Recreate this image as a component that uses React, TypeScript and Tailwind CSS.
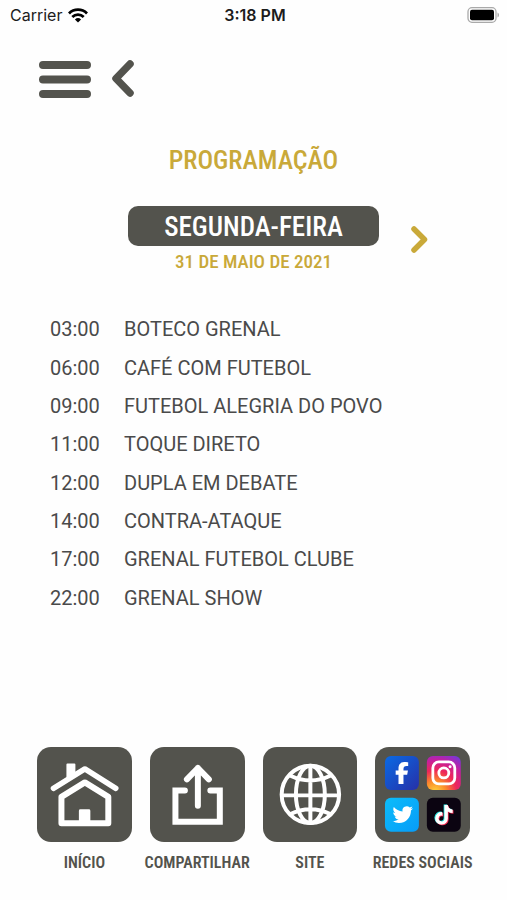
import type { ReactNode } from "react";
import { FaFacebookF, FaTiktok } from "react-icons/fa6";

type Program = {
  time: string;
  name: string;
};

const programs: Program[] = [
  { time: "03:00", name: "BOTECO GRENAL" },
  { time: "06:00", name: "CAFÉ COM FUTEBOL" },
  { time: "09:00", name: "FUTEBOL ALEGRIA DO POVO" },
  { time: "11:00", name: "TOQUE DIRETO" },
  { time: "12:00", name: "DUPLA EM DEBATE" },
  { time: "14:00", name: "CONTRA-ATAQUE" },
  { time: "17:00", name: "GRENAL FUTEBOL CLUBE" },
  { time: "22:00", name: "GRENAL SHOW" },
];

function StatusBar() {
  return (
    <div className="grid h-[30px] grid-cols-3 items-center pr-[7px] pl-[10px] font-['Inter','Liberation_Sans',sans-serif] text-base text-[#1c1c1c]">
      <div className="flex items-center gap-[6px]">
        <span>Carrier</span>
        <svg viewBox="0 0 20 15" className="h-[15px] w-[20px]" fill="none" stroke="#000" strokeWidth="2.8">
          <path d="M1 5.4a12.8 12.8 0 0 1 18 0" />
          <path d="M4.3 8.9a8.2 8.2 0 0 1 11.4 0" />
          <path d="M10 14.6 6.9 11.4a4.5 4.5 0 0 1 6.2 0z" fill="#000" stroke="none" />
        </svg>
      </div>
      <span className="text-center font-semibold">3:18 PM</span>
      <svg viewBox="0 0 33 16" className="h-[16px] w-[33px] justify-self-end">
        <rect x="1" y="0.7" width="28" height="14.6" rx="4" fill="none" stroke="#a9a9a9" strokeWidth="1.3" />
        <rect x="3" y="2.8" width="24" height="10.4" rx="2" fill="#000" />
        <path d="M30.5 5.5c2 .8 2 4.2 0 5z" fill="#a9a9a9" />
      </svg>
    </div>
  );
}

function HomeIcon() {
  return (
    <svg viewBox="0 0 95 95" className="w-full" fill="none" stroke="#fff" strokeLinecap="round" strokeLinejoin="round">
      <path d="M30.5 30V17.5h7V25z" fill="#fff" strokeWidth="2" />
      <path d="M16.5 41.5 48 22l31 19.5" strokeWidth="5.5" />
      <path d="M24.5 50 48 35.5 71.5 50v26.5h-47z" strokeWidth="6" />
      <path d="M43.5 76V64H52v12z" fill="#fff" strokeWidth="3" />
    </svg>
  );
}

function ShareIcon() {
  return (
    <svg viewBox="0 0 95 95" className="w-full" fill="none" stroke="#fff" strokeWidth="6" strokeLinecap="round">
      <path d="M48 59V21M37 32.5 48 21l11 11.5" strokeLinejoin="round" />
      <path d="M35 43.5h-9.5V75H70V43.5h-9.5" />
    </svg>
  );
}

function GlobeIcon() {
  return (
    <svg viewBox="0 0 95 95" className="w-full" fill="none" stroke="#fff" strokeWidth="4">
      <circle cx="47.5" cy="47.5" r="28.8" />
      <ellipse cx="47.5" cy="47.5" rx="14.5" ry="28.8" />
      <path d="M47.5 18.5v58M18.5 48.5h58M27 28.5q20.5 10 41 0M27 67.5q20.5-10 41 0" />
    </svg>
  );
}

function SocialIcons() {
  return (
    <svg viewBox="0 0 95 95" className="w-full">
      <defs>
        <linearGradient id="fb" x1="0" y1="0" x2="1" y2="1">
          <stop offset="0" stopColor="#0a6ae4" />
          <stop offset="1" stopColor="#2630a8" />
        </linearGradient>
        <linearGradient id="tw" x1="0" y1="0" x2="1" y2="1">
          <stop offset="0" stopColor="#0cbcfa" />
          <stop offset="1" stopColor="#079cf8" />
        </linearGradient>
        <radialGradient id="ig" cx="0.25" cy="1.05" r="1.25">
          <stop offset="0" stopColor="#fed43c" />
          <stop offset="0.25" stopColor="#fb8a2b" />
          <stop offset="0.5" stopColor="#ee2858" />
          <stop offset="0.75" stopColor="#c41fa0" />
          <stop offset="1" stopColor="#6b3be0" />
        </radialGradient>
      </defs>
      <rect x="10" y="9" width="34" height="34" rx="6" fill="url(#fb)" />
      <FaFacebookF x="16" y="15" size="22" color="#fff" />

      <rect x="52" y="9" width="34" height="34" rx="6" fill="url(#ig)" />
      <g fill="none" stroke="#fff" strokeWidth="2.8">
        <rect x="58" y="15" width="22" height="22" rx="6" />
        <circle cx="69" cy="26" r="5" />
      </g>
      <circle cx="75.3" cy="19.7" r="1.5" fill="#fff" />

      <rect x="10" y="51" width="34" height="34" rx="6" fill="url(#tw)" />
      <path
        transform="translate(17.5 57.5) scale(0.86)"
        fill="#fff"
        d="M23.95 4.57a10 10 0 0 1-2.82.77 4.96 4.96 0 0 0 2.16-2.72c-.95.56-2 .96-3.13 1.18a4.92 4.92 0 0 0-8.38 4.48C7.69 8.1 4.07 6.13 1.64 3.16a4.82 4.82 0 0 0-.67 2.47c0 1.71.87 3.21 2.19 4.1a4.9 4.9 0 0 1-2.23-.62v.06a4.92 4.92 0 0 0 3.95 4.83 5 5 0 0 1-2.21.08 4.94 4.94 0 0 0 4.6 3.42A9.87 9.87 0 0 1 0 19.54a14 14 0 0 0 7.55 2.21c9.05 0 14-7.5 14-13.98 0-.21 0-.42-.02-.63a9.94 9.94 0 0 0 2.46-2.55z"
      />

      <rect x="52" y="51" width="34" height="34" rx="6" fill="#0b0411" />
      <FaTiktok x="58.3" y="57.3" size="20" color="#25e5e0" />
      <FaTiktok x="59.9" y="58.7" size="20" color="#f82c54" />
      <FaTiktok x="59.1" y="58" size="20" color="#fff" />
    </svg>
  );
}

function NavButton({ label, children }: { label: string; children: ReactNode }) {
  return (
    <button type="button" className="flex min-w-0 flex-col items-center gap-[11px]">
      <span className="block w-full rounded-[14px] bg-[#53534d]">{children}</span>
      <span className="text-base leading-5 font-semibold whitespace-nowrap text-[#53534d]">{label}</span>
    </button>
  );
}

export default function App() {
  return (
    <div className="flex min-h-screen flex-col bg-[#fefefe] font-['Roboto_Condensed','Roboto',sans-serif]">
      <StatusBar />

      <header className="flex items-center gap-5 px-[38px] pt-[29px]">
        <button type="button" aria-label="Menu">
          <svg viewBox="0 0 54 40" className="h-10 w-[54px]" stroke="#53534d" strokeWidth="8" strokeLinecap="round">
            <path d="M5 6h44M5 20.5h44M5 35h44" />
          </svg>
        </button>
        <button type="button" aria-label="Voltar">
          <svg viewBox="0 0 24 40" className="h-10 w-6" fill="none" stroke="#53534d" strokeWidth="7.5" strokeLinecap="round" strokeLinejoin="round">
            <path d="M18 5 4 19.5 18 34" />
          </svg>
        </button>
      </header>

      <main className="flex-1">
        <h1 className="mt-[45px] text-center text-[26px] leading-8 font-medium text-[#c9a939]">PROGRAMAÇÃO</h1>

        <section className="mt-[30px] grid grid-cols-[1fr_251px_1fr] items-center">
          <div className="col-start-2 text-center">
            <h2 className="rounded-[10px] bg-[#53534d] pt-[2px] text-[27px] leading-[38px] font-medium text-white">SEGUNDA-FEIRA</h2>
            <p className="mt-1 text-[19px] leading-6 font-medium text-[#c9a939]">31 DE MAIO DE 2021</p>
          </div>
          <button type="button" aria-label="Próximo dia" className="ml-[30px] justify-self-start">
            <svg viewBox="0 0 20 28" className="h-7 w-5" fill="none" stroke="#c9a939" strokeWidth="5.5" strokeLinecap="round" strokeLinejoin="round">
              <path d="M5 3 15.5 13.5 5 24" />
            </svg>
          </button>
        </section>

        <ul className="mt-9 grid h-[307px] auto-rows-fr px-[50px] font-['Roboto',sans-serif] text-xl text-[#4a4a4a]">
          {programs.map((program) => (
            <li key={program.time} className="flex items-center">
              <time className="w-[74px]">{program.time}</time>
              <span>{program.name}</span>
            </li>
          ))}
        </ul>
      </main>

      <nav className="grid grid-cols-4 gap-[18px] px-[37px] pb-[27px]">
        <NavButton label="INÍCIO">
          <HomeIcon />
        </NavButton>
        <NavButton label="COMPARTILHAR">
          <ShareIcon />
        </NavButton>
        <NavButton label="SITE">
          <GlobeIcon />
        </NavButton>
        <NavButton label="REDES SOCIAIS">
          <SocialIcons />
        </NavButton>
      </nav>
    </div>
  );
}
